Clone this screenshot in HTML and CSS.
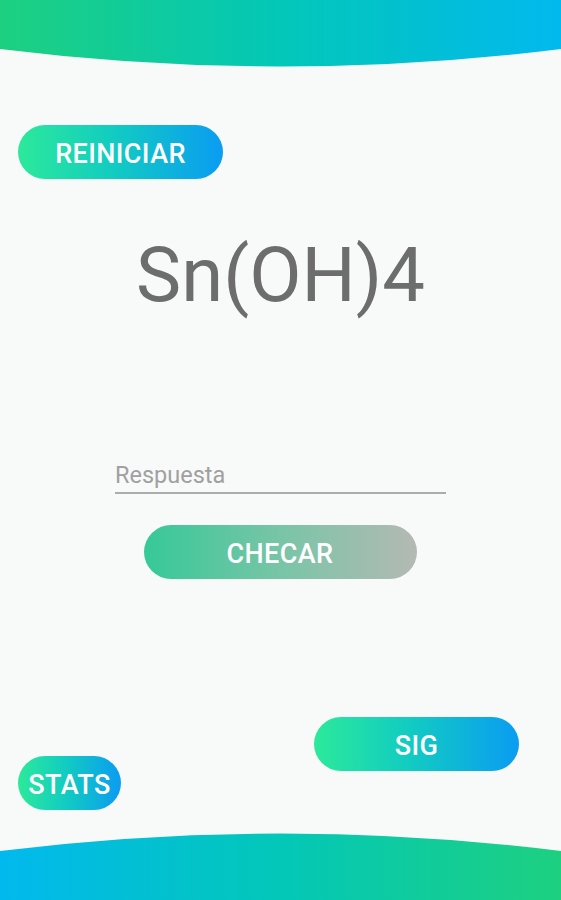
FILE: index.html
```html
<!DOCTYPE html>
<html lang="es">
<head>
<meta charset="utf-8">
<link rel="stylesheet" href="styles.css">
</head>
<body>
<div class="screen">
  <svg class="wave wave-top" viewBox="0 0 561 70" preserveAspectRatio="none">
    <defs>
      <linearGradient id="gt" x1="0" y1="0" x2="1" y2="0">
        <stop offset="0" stop-color="#1dd080"/>
        <stop offset="0.5" stop-color="#03c7b8"/>
        <stop offset="1" stop-color="#02b9ee"/>
      </linearGradient>
    </defs>
    <path d="M0 0 H561 V49 Q280 84 0 49 Z" fill="url(#gt)"/>
  </svg>

  <div class="content">
    <div class="row-left">
      <button class="pill pill-restart">REINICIAR</button>
    </div>
    <h1 class="formula">Sn(OH)4</h1>
    <div class="answer">
      <div class="field">Respuesta</div>
      <button class="pill pill-check">CHECAR</button>
    </div>
    <div class="bottom-row">
      <button class="pill pill-stats">STATS</button>
      <button class="pill pill-next">SIG</button>
    </div>
  </div>

  <svg class="wave wave-bottom" viewBox="0 0 561 68" preserveAspectRatio="none">
    <defs>
      <linearGradient id="gb" x1="0" y1="0" x2="1" y2="0">
        <stop offset="0" stop-color="#02b9ee"/>
        <stop offset="0.5" stop-color="#03c7b8"/>
        <stop offset="1" stop-color="#1dd080"/>
      </linearGradient>
    </defs>
    <path d="M0 19 Q280 -16 561 19 V68 H0 Z" fill="url(#gb)"/>
  </svg>
</div>
</body>
</html>
```

FILE: styles.css
```css
html, body {
  margin: 0;
  padding: 0;
  background: #f8f9f9;
}
.screen {
  width: 561px;
  height: 900px;
  display: flex;
  flex-direction: column;
  font-family: Roboto, "Liberation Sans", sans-serif;
  overflow: hidden;
}
.wave {
  display: block;
  width: 561px;
  flex: none;
}
.wave-top { height: 70px; }
.wave-bottom { height: 68px; margin-top: auto; }
.content {
  flex: 1;
  display: flex;
  flex-direction: column;
}
.pill {
  border: none;
  border-radius: 27px;
  height: 54px;
  color: #fff;
  font-family: Roboto, "Liberation Sans", sans-serif;
  font-weight: 500;
  font-size: 27px;
  letter-spacing: 0.4px;
  padding: 3px 0 0 0;
  background: linear-gradient(90deg, #2ce99b 0%, #12cdc0 45%, #0a9cf2 100%);
}
.row-left {
  padding: 55px 0 0 18px;
}
.pill-restart { width: 205px; }
.formula {
  margin: 50px 0 0 0;
  text-align: center;
  font-weight: 400;
  font-size: 76px;
  line-height: 92px;
  color: #6d6d6d;
}
.answer {
  margin-top: 142px;
  display: flex;
  flex-direction: column;
  align-items: center;
}
.field {
  width: 331px;
  font-size: 23.5px;
  color: #a0a0a0;
  padding-bottom: 5px;
  border-bottom: 2px solid #acacac;
  line-height: 24px;
  box-sizing: border-box;
}
.pill-check {
  margin-top: 31px;
  width: 273px;
  margin-left: -1px;
  background: linear-gradient(90deg, #36c998 0%, #7fc4a8 55%, #b4b9b3 100%);
}
.bottom-row {
  margin-top: 138px;
  display: flex;
  justify-content: space-between;
  align-items: flex-start;
  padding: 0 42px 0 18px;
}
.pill-stats {
  width: 103px;
  margin-top: 39px;
}
.pill-next { width: 205px; }
```
